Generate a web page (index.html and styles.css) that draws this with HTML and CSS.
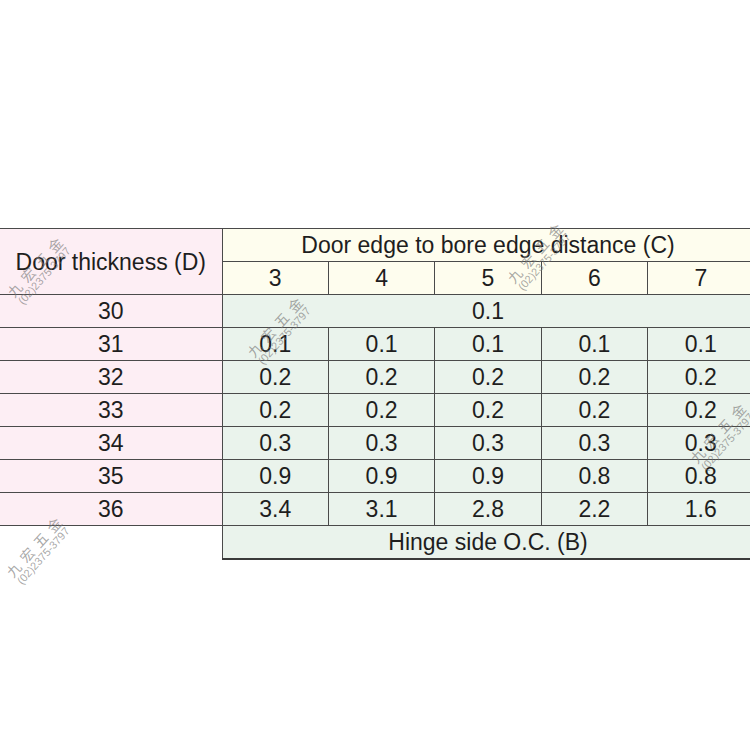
FILE: index.html
```html
<!DOCTYPE html>
<html>
<head>
<meta charset="utf-8">
<link rel="stylesheet" href="styles.css">
</head>
<body>
<div class="page">
  <table class="spec">
    <colgroup>
      <col class="c-left">
      <col class="c-num"><col class="c-num"><col class="c-num"><col class="c-num"><col class="c-num">
    </colgroup>
    <tr>
      <td class="pink head-left" rowspan="2">Door thickness (D)</td>
      <td class="cream" colspan="5">Door edge to bore edge distance (C)</td>
    </tr>
    <tr>
      <td class="cream">3</td><td class="cream">4</td><td class="cream">5</td><td class="cream">6</td><td class="cream">7</td>
    </tr>
    <tr><td class="pink">30</td><td class="green" colspan="5">0.1</td></tr>
    <tr><td class="pink">31</td><td class="green">0.1</td><td class="green">0.1</td><td class="green">0.1</td><td class="green">0.1</td><td class="green">0.1</td></tr>
    <tr><td class="pink">32</td><td class="green">0.2</td><td class="green">0.2</td><td class="green">0.2</td><td class="green">0.2</td><td class="green">0.2</td></tr>
    <tr><td class="pink">33</td><td class="green">0.2</td><td class="green">0.2</td><td class="green">0.2</td><td class="green">0.2</td><td class="green">0.2</td></tr>
    <tr><td class="pink">34</td><td class="green">0.3</td><td class="green">0.3</td><td class="green">0.3</td><td class="green">0.3</td><td class="green">0.3</td></tr>
    <tr><td class="pink">35</td><td class="green">0.9</td><td class="green">0.9</td><td class="green">0.9</td><td class="green">0.8</td><td class="green">0.8</td></tr>
    <tr><td class="pink">36</td><td class="green">3.4</td><td class="green">3.1</td><td class="green">2.8</td><td class="green">2.2</td><td class="green">1.6</td></tr>
    <tr><td class="blank"></td><td class="green foot" colspan="5">Hinge side O.C. (B)</td></tr>
  </table>

  <div class="wm wm1"><div class="wm-name">九宏五金</div><div class="wm-tel">(02)2375-3797</div></div>
  <div class="wm wm2"><div class="wm-name">九宏五金</div><div class="wm-tel">(02)2375-3797</div></div>
  <div class="wm wm3"><div class="wm-name">九宏五金</div><div class="wm-tel">(02)2375-3797</div></div>
  <div class="wm wm4"><div class="wm-name">九宏五金</div><div class="wm-tel">(02)2375-3797</div></div>
  <div class="wm wm5"><div class="wm-name">九宏五金</div><div class="wm-tel">(02)2375-3797</div></div>
</div>
</body>
</html>
```

FILE: styles.css
```css
html, body {
  margin: 0;
  padding: 0;
  background: #ffffff;
  overflow: hidden;
}
.page {
  position: relative;
  width: 750px;
  height: 750px;
  overflow: hidden;
  padding-top: 228px;
  box-sizing: border-box;
}
.spec {
  border-collapse: collapse;
  table-layout: fixed;
  width: 754px;
  font-family: "Liberation Sans", Arial, sans-serif;
  font-size: 23px;
  color: #1e1e1e;
}
.c-left { width: 222px; }
.c-num { width: 106.4px; }
.spec td {
  height: 32px;
  padding: 0;
  text-align: center;
  vertical-align: middle;
  border: 1.5px solid #4a4a4a;
  line-height: 26px;
}
.spec td:first-child { border-left: none; }
.pink { background: #fdeef4; }
.cream { background: #fefdee; }
.green { background: #eaf3ec; }
.blank {
  background: #ffffff;
  border-left: none !important;
  border-bottom: none !important;
}
.spec td.foot { border-bottom: 2px solid #3a3a3a; }

.wm {
  position: absolute;
  transform: rotate(-48deg);
  transform-origin: center center;
  color: rgba(120, 120, 120, 0.65);
  font-family: "Noto Sans CJK TC", "Liberation Sans", sans-serif;
  text-align: center;
  line-height: 1;
  white-space: nowrap;
  pointer-events: none;
}
.wm-name {
  font-size: 14px;
  letter-spacing: 6px;
  padding-left: 6px;
}
.wm-tel {
  font-family: "Liberation Sans", Arial, sans-serif;
  font-size: 11px;
  margin-top: 1px;
}
.wm1 { left: -4px; top: 258px; }
.wm2 { left: 236px; top: 318px; }
.wm3 { left: 496px; top: 244px; }
.wm4 { left: 679px; top: 424px; }
.wm5 { left: -5px; top: 538px; }
```
